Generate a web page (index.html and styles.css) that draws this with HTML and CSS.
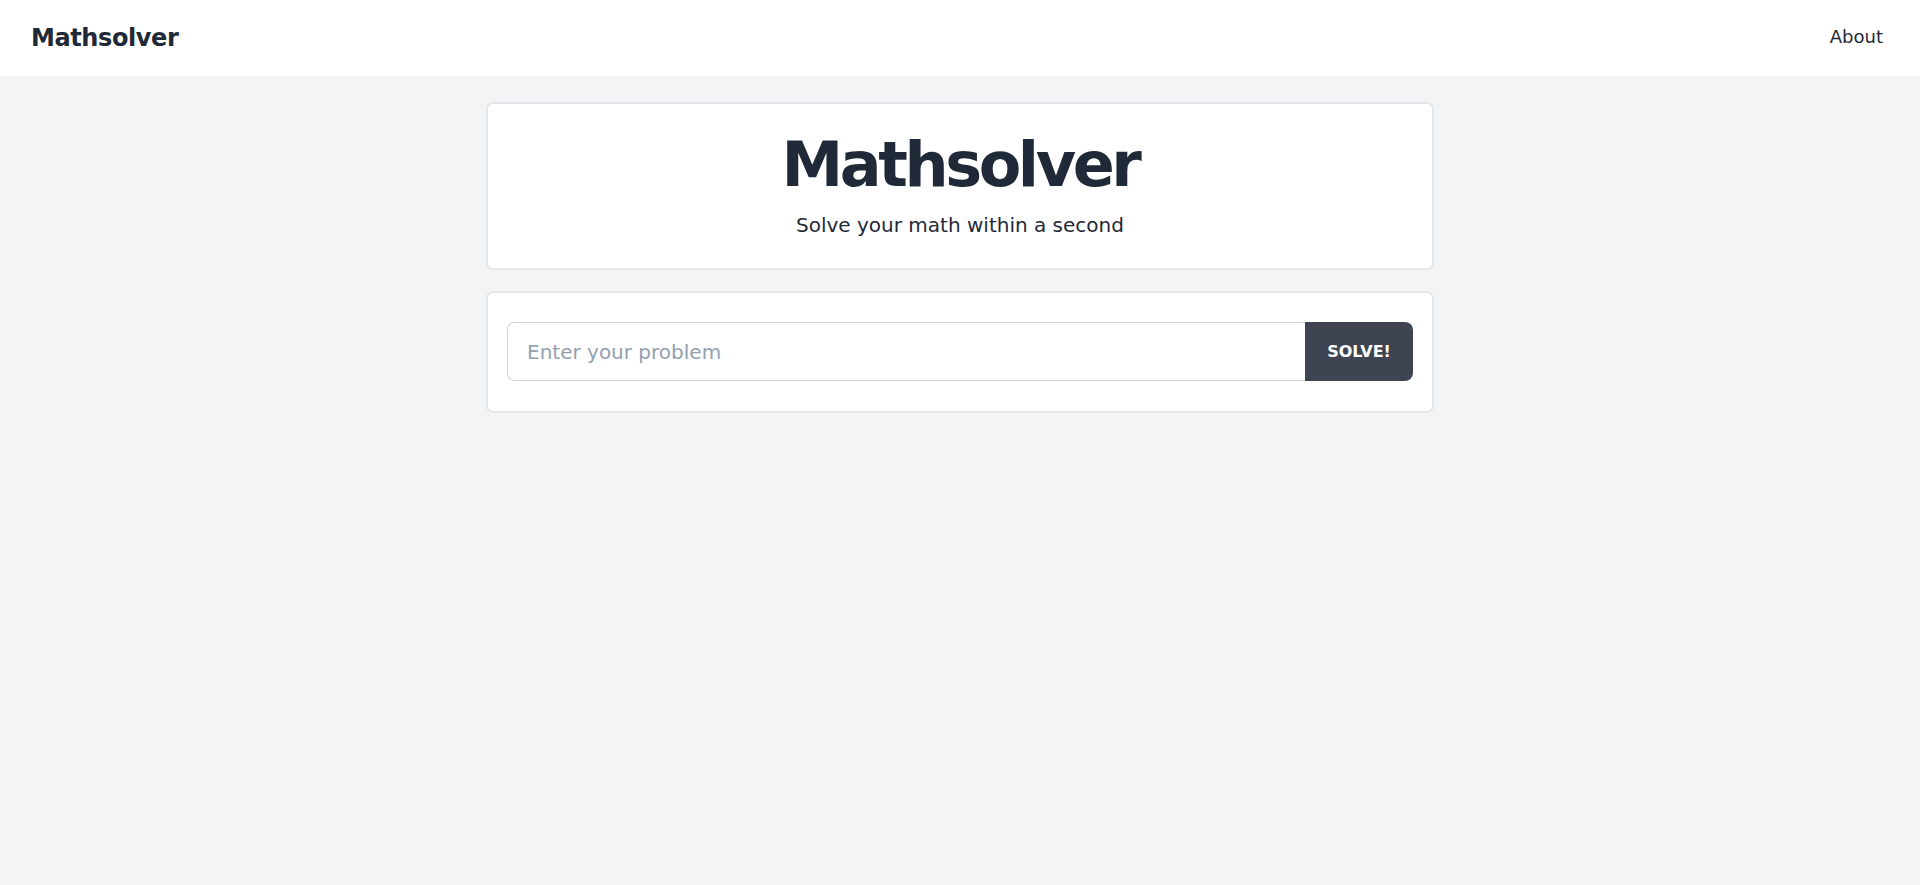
FILE: index.html
```html
<!DOCTYPE html>
<html lang="en">
<head>
<meta charset="utf-8">
<title>Mathsolver</title>
<link rel="stylesheet" href="styles.css">
</head>
<body>
<header class="navbar">
  <a class="brand" href="#">Mathsolver</a>
  <nav class="nav-links"><a href="#" class="nav-link">About</a></nav>
</header>
<main class="container">
  <section class="card hero">
    <h1 class="hero-title">Mathsolver</h1>
    <p class="hero-sub">Solve your math within a second</p>
  </section>
  <section class="card form-card">
    <form class="solve-form" onsubmit="return false;">
      <input class="solve-input" type="text" placeholder="Enter your problem">
      <button class="solve-btn" type="submit">SOLVE!</button>
    </form>
  </section>
</main>
</body>
</html>
```
FILE: styles.css
```css
* { box-sizing: border-box; }
html, body { margin: 0; padding: 0; }
body {
  background: #f3f4f6;
  font-family: "DejaVu Sans", "Liberation Sans", sans-serif;
  color: #1f2937;
  min-height: 885px;
}
.navbar {
  height: 76px;
  background: #ffffff;
  display: flex;
  align-items: center;
  justify-content: space-between;
  padding: 0 37px 0 31px;
}
.brand {
  font-size: 24px;
  line-height: 32px;
  font-weight: 700;
  letter-spacing: -0.4px;
  color: #1f2937;
  text-decoration: none;
}
.nav-link {
  display: block;
  font-size: 18px;
  line-height: 24px;
  color: #1f2937;
  text-decoration: none;
  margin-top: -3px;
}
.container {
  width: 948px;
  margin: 26px auto 0;
  display: flex;
  flex-direction: column;
  gap: 21px;
}
.card {
  background: #ffffff;
  border: 2px solid #e5e7eb;
  border-radius: 7px;
}
.hero {
  text-align: center;
  padding: 25px 20px 29px;
}
.hero-title {
  margin: 0;
  font-size: 62px;
  line-height: 72px;
  font-weight: 700;
  letter-spacing: -3.4px;
  color: #1f2937;
}
.hero-sub {
  margin: 10px 0 0;
  font-size: 20px;
  line-height: 28px;
  color: #1f2937;
}
.form-card {
  padding: 29px 19px 30px;
}
.solve-form {
  display: flex;
  height: 59px;
}
.solve-input {
  flex: 1;
  min-width: 0;
  height: 59px;
  border: 1px solid #d1d5db;
  border-right: none;
  border-radius: 7px 0 0 7px;
  padding: 0 19px;
  font-family: "DejaVu Sans", "Liberation Sans", sans-serif;
  font-size: 20px;
  color: #1f2937;
  outline: none;
  background: #fff;
}
.solve-input::placeholder { color: #94a0b2; }
.solve-btn {
  width: 108px;
  height: 59px;
  border: none;
  border-radius: 0 8px 8px 0;
  background: #3f4452;
  color: #ffffff;
  font-family: "DejaVu Sans", "Liberation Sans", sans-serif;
  font-weight: 700;
  font-size: 16px;
  padding: 0;
  cursor: pointer;
}
```
